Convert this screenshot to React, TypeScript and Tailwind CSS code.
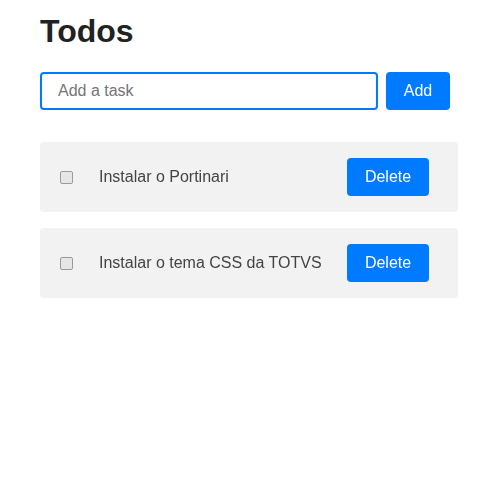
import { useState } from 'react';

interface Todo {
  id: number;
  title: string;
  done: boolean;
}

export default function App() {
  const [todos, setTodos] = useState<Todo[]>([
    { id: 1, title: 'Instalar o Portinari', done: false },
    { id: 2, title: 'Instalar o tema CSS da TOTVS', done: false },
  ]);
  const [text, setText] = useState('');

  const add = () => {
    if (!text.trim()) return;
    setTodos([...todos, { id: Date.now(), title: text, done: false }]);
    setText('');
  };

  return (
    <div className="min-h-[496px] bg-white font-['Liberation_Sans',Arial,sans-serif]">
      <div className="ml-10 w-[418px] pt-[13px]">
        <h1 className="text-[32px] font-bold leading-[37px] text-[#222]">Todos</h1>

        <div className="mt-[22px] flex gap-2">
          <input
            autoFocus
            value={text}
            onChange={(e) => setText(e.target.value)}
            placeholder="Add a task"
            className="h-[38px] w-[338px] rounded border-2 border-[#007bff] px-4 text-[16px] text-[#333] outline-none placeholder:text-[#757575]"
          />
          <button
            onClick={add}
            className="h-[38px] w-16 rounded bg-[#007bff] text-[16px] text-white"
          >
            Add
          </button>
        </div>

        <ul className="mt-8 flex flex-col gap-4">
          {todos.map((t) => (
            <li key={t.id} className="flex h-[70px] items-center rounded bg-[#f2f2f2] pl-5 pr-[29px]">
              <input
                type="checkbox"
                checked={t.done}
                onChange={() =>
                  setTodos(todos.map((x) => (x.id === t.id ? { ...x, done: !x.done } : x)))
                }
                className="m-0 h-[13px] w-[13px] appearance-none rounded-[2px] border border-[#9a9a9a] bg-[#e6e6e6] checked:bg-[#007bff]"
              />
              <span className="ml-[26px] flex-1 text-[16px] text-[#444]">{t.title}</span>
              <button
                onClick={() => setTodos(todos.filter((x) => x.id !== t.id))}
                className="h-[38px] w-[82px] rounded bg-[#007bff] text-[16px] text-white"
              >
                Delete
              </button>
            </li>
          ))}
        </ul>
      </div>
    </div>
  );
}
